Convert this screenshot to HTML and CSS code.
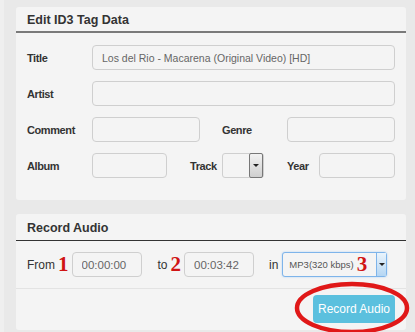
FILE: index.html
```html
<!DOCTYPE html>
<html lang="en">
<head>
    <meta charset="UTF-8" />
    <title>Edit ID3 Tag Data</title>
    <link rel="stylesheet" href="styles.css">
</head>
<body>
<div class="page">
    <!-- ID3 tags -->
    <div class="panel">
        <div class="panel-head head-tags">Edit ID3 Tag Data</div>
        <div class="panel-body tags-body">
            <div class="row">
                <label class="lbl">Title</label>
                <input type="text" class="field wide title" value="Los del Rio - Macarena (Original Video) [HD]" />
            </div>
            <div class="row">
                <label class="lbl">Artist</label>
                <input type="text" class="field wide" />
            </div>
            <div class="row">
                <label class="lbl">Comment</label>
                <input type="text" class="field half" />
                <label class="lbl lbl-genre">Genre</label>
                <input type="text" class="field half" />
            </div>
            <div class="row">
                <label class="lbl">Album</label>
                <input type="text" class="field album" />
                <label class="lbl lbl-small">Track</label>
                <div class="combo track">
                    <span class="combo-text"></span>
                    <span class="combo-btn"><span class="caret"></span></span>
                </div>
                <label class="lbl lbl-small">Year</label>
                <input type="text" class="field year" />
            </div>
        </div>
    </div>

    <!-- Gravar -->
    <div class="panel panel-rec">
        <div class="panel-head head-rec">Record Audio</div>
        <div class="panel-body rec-body">
            <span class="word">From</span>
            <span class="num">1</span>
            <input type="text" class="field time" value="00:00:00" />
            <span class="word word-to">to</span>
            <span class="num">2</span>
            <input type="text" class="field time" value="00:03:42" />
            <span class="word word-in">in</span>
            <div class="combo format">
                <span class="combo-text">MP3(320 kbps)</span>
                <span class="num num-in">3</span>
                <span class="combo-btn"><span class="caret"></span></span>
            </div>
        </div>
        <div class="panel-foot">
            <button type="button" class="btn-rec">Record Audio</button>
        </div>
        <svg class="mark" width="116" height="54" viewBox="0 0 116 54">
            <ellipse cx="58" cy="27" rx="55" ry="24" fill="none" stroke="#e01818" stroke-width="4.5" />
        </svg>
    </div>
</div>
</body>
</html>
```

FILE: styles.css
```css
body {
    margin: 0;
    background: #e9e9e9;
    font-family: "Liberation Sans", Arial, sans-serif;
    font-size: 12px;
    color: #333;
}
.page {
    height: 332px;
    padding: 7px 0 0 12px;
    border-left: 4px solid #efefef;
    overflow: hidden;
}
.panel {
    width: 390px;
    background: #f4f4f4;
    border-radius: 3px;
    position: relative;
}
.panel-rec {
    margin-top: 14px;
}
.panel-head {
    padding: 0 11px;
    font-weight: bold;
    font-size: 12.5px;
}
.head-tags {
    height: 24px;
    line-height: 26px;
    border-bottom: 2px solid #7a7a7a;
}
.head-rec {
    height: 26px;
    line-height: 28px;
    border-bottom: 1px solid #333;
}
.tags-body {
    padding: 12px 11px 22px;
    display: flex;
    flex-direction: column;
    gap: 11px;
}
.row {
    display: flex;
    align-items: center;
}
.lbl {
    width: 65px;
    font-weight: bold;
    font-size: 11px;
    letter-spacing: -0.4px;
}
.lbl-genre {
    margin-left: 22px;
}
.lbl-small {
    width: 32px;
    margin-left: 23px;
}
.field {
    box-sizing: border-box;
    height: 25px;
    border: 1px solid #cfcfcf;
    border-radius: 4px;
    background: #f4f4f4;
    padding: 0 9px;
    font-family: "Liberation Sans", Arial, sans-serif;
    font-size: 11.5px;
    color: #666;
}
.title {
    font-size: 10.5px;
}
.wide { width: 303px; }
.half { width: 108px; }
.album { width: 75px; }
.year { width: 76px; }
.combo {
    box-sizing: border-box;
    height: 25px;
    display: flex;
    align-items: center;
    border: 1px solid #cfcfcf;
    border-radius: 3px;
    background: #f4f4f4;
}
.combo-text {
    flex: 1;
    padding-left: 6px;
    font-size: 9.5px;
    color: #555;
    white-space: nowrap;
}
.combo-btn {
    width: 12px;
    height: 23px;
    display: flex;
    align-items: center;
    justify-content: center;
    border-left: 1px solid #8a8a8a;
    background: linear-gradient(#f2f2f2, #cfcfcf);
}
.caret {
    border-left: 3px solid transparent;
    border-right: 3px solid transparent;
    border-top: 3px solid #222;
}
.track {
    width: 42px;
}
.track .combo-btn {
    border: 1px solid #777;
    border-radius: 2px;
}
.format {
    width: 105px;
    margin-left: 4px;
    border-color: #7eb4ea;
    box-shadow: 0 0 2px #a9cdf2;
}
.format .combo-btn {
    width: 9px;
    border-left-color: #7eb4ea;
    background: linear-gradient(#eaf4fc, #b5d6f3);
}
.rec-body {
    height: 47px;
    padding: 0 11px;
    display: flex;
    align-items: center;
}
.word {
    color: #333;
}
.word-to {
    margin-left: 16px;
}
.word-in {
    margin-left: 15px;
}
.num {
    font-family: "Liberation Serif", "Times New Roman", serif;
    font-weight: bold;
    font-size: 21px;
    color: #d01414;
    margin: 0 3px 0 3px;
    line-height: 1;
}
.num-in {
    margin: 0 9px 0 0;
}
.time {
    width: 70px;
}
.panel-foot {
    height: 42px;
    border-top: 1px solid #e3e3e3;
    display: flex;
    justify-content: flex-end;
    align-items: flex-start;
    padding: 6px 11px 0;
    box-sizing: border-box;
}
.btn-rec {
    width: 82px;
    height: 28px;
    background: #5bc0de;
    border: none;
    border-radius: 4px;
    color: white;
    font-family: "Liberation Sans", Arial, sans-serif;
    font-size: 12px;
    padding: 0;
}
.mark {
    position: absolute;
    left: 278px;
    top: 67px;
}
```
